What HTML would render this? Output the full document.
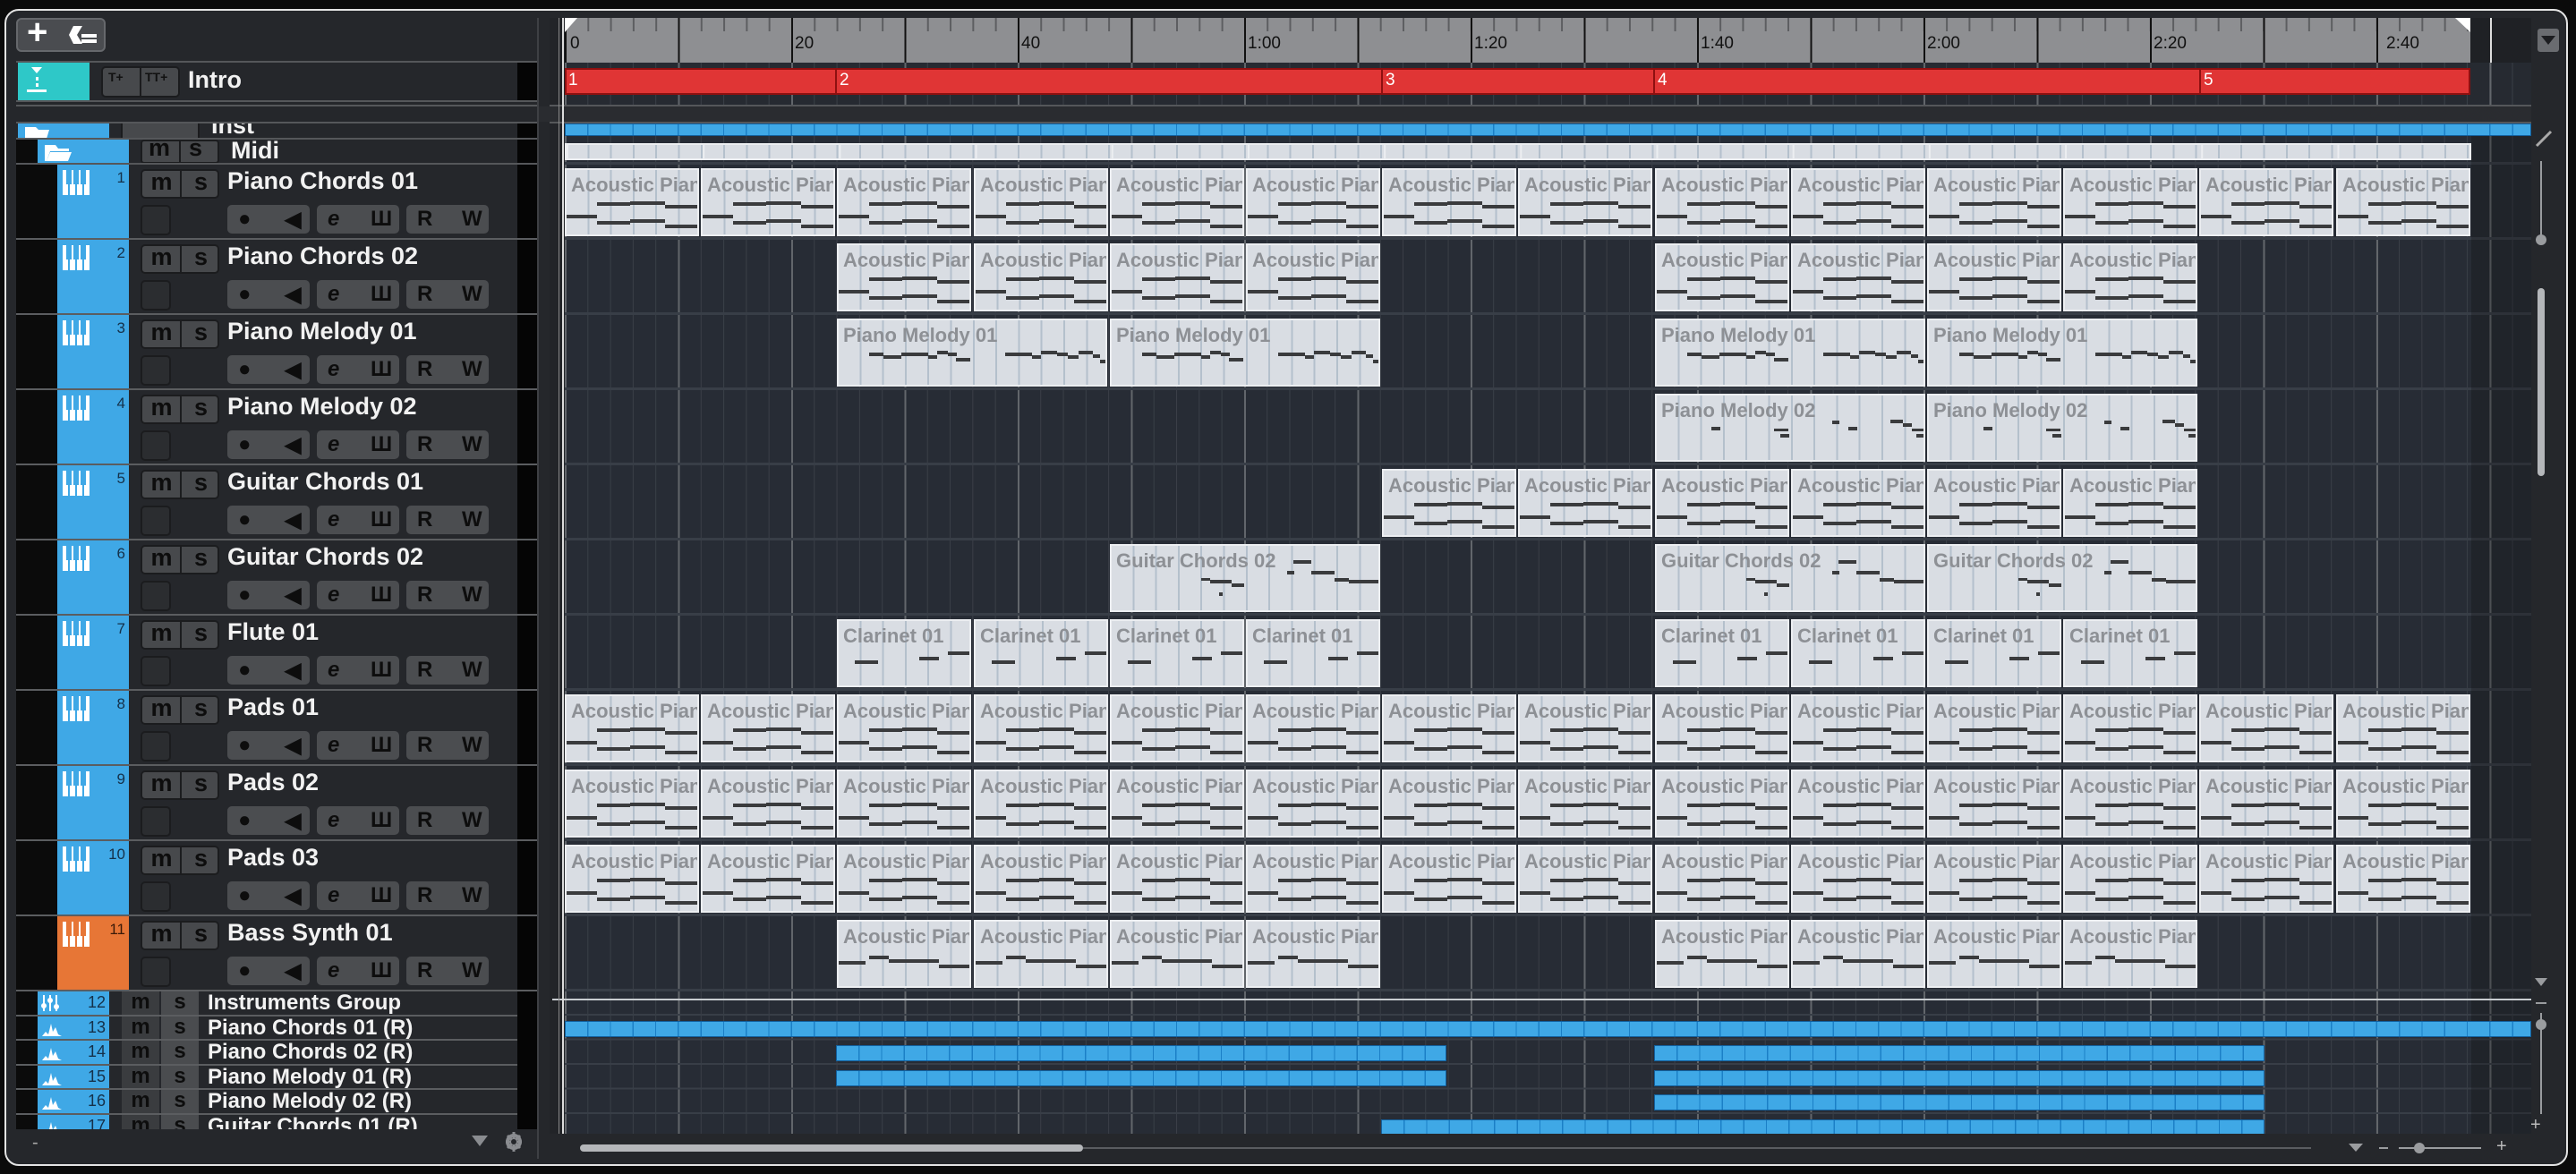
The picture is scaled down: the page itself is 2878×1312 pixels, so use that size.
<!DOCTYPE html>
<html><head><meta charset="utf-8">
<style>
*{box-sizing:border-box}
body{margin:0;width:2878px;height:1312px;background:#0b0b0b;overflow:hidden;position:relative;font-family:"Liberation Sans Narrow","Liberation Sans",sans-serif}
div{position:absolute}
.win{left:5px;top:10px;width:2864px;height:1293px;border:2px solid #e4e4e4;border-radius:16px;background:#25272b}
.tr{left:0;width:600px;height:84px}
.blk{left:18px;top:0;width:46px;height:84px;background:#0b0b0b}
.col{left:64px;top:0;width:80px;height:82px;background:#3fa8e6}
.num{left:108px;top:5px;width:32px;text-align:right;font:17px "Liberation Sans",sans-serif;color:#15314a}
.ms{left:157px;top:5px;width:88px;height:33px;border:2px solid #1b1c1e;border-radius:5px;background:#47494c;overflow:hidden}
.ms span{position:absolute;top:-3px;width:43px;text-align:center;font:bold 27px "Liberation Sans",sans-serif;color:#0d0d0d}
.ms i{position:absolute;left:42px;top:0;width:2px;height:100%;background:#1b1c1e}
.nm{left:254px;top:3px;font-weight:bold;font-size:27px;color:#f2f2f2;white-space:nowrap}
.sq{left:157px;top:45px;width:34px;height:34px;border:2px solid #1b1c1e;border-radius:5px;background:#2b2d30}
.g{top:45px;width:92px;height:32px;border-radius:5px;background:#4b4d50;font:bold 24px "Liberation Sans",sans-serif;color:#0d0d0d}
.g span{position:absolute;top:2px}
.bs{left:578px;top:0;width:22px;height:84px;background:#050505}
.ln{left:18px;top:82px;width:582px;height:2px;background:#5b5d60}
.c{top:4px;height:76px;width:150px;border:2px solid #eceef1;background-color:#d9dde3;overflow:hidden;font:bold 22px "Liberation Sans",sans-serif;color:#8d9095;white-space:nowrap;padding:4px 0 0 5px;
 --b:linear-gradient(#3a3b3d,#3a3b3d);--v:repeating-linear-gradient(90deg,transparent 0 23.3px,#b4c0cc 23.3px 25.3px)}
.w2{width:302px}
.pa{background:var(--b) 34px 36px/37px 4px no-repeat,var(--b) 71px 35px/39px 4px no-repeat,var(--b) 110px 39px/36px 4px no-repeat,var(--b) 0 50px/34px 4px no-repeat,var(--b) 34px 57px/37px 4px no-repeat,var(--b) 71px 55px/39px 4px no-repeat,var(--b) 110px 61px/36px 4px no-repeat,var(--v),#d9dde3}
.pm{background:var(--b) 34px 36px/16px 4px no-repeat,var(--b) 50px 39px/20px 4px no-repeat,var(--b) 70px 36px/30px 4px no-repeat,var(--b) 100px 39px/10px 4px no-repeat,var(--b) 110px 34px/12px 4px no-repeat,var(--b) 122px 36px/10px 4px no-repeat,var(--b) 131px 42px/16px 4px no-repeat,var(--b) 186px 36px/30px 4px no-repeat,var(--b) 216px 39px/10px 4px no-repeat,var(--b) 226px 34px/18px 4px no-repeat,var(--b) 244px 36px/12px 4px no-repeat,var(--b) 256px 39px/12px 4px no-repeat,var(--b) 268px 34px/16px 4px no-repeat,var(--b) 284px 38px/8px 4px no-repeat,var(--b) 292px 44px/8px 4px no-repeat,var(--v),#d9dde3}
.pn{background:var(--b) 61px 35px/10px 4px no-repeat,var(--b) 131px 37px/16px 3px no-repeat,var(--b) 138px 43px/10px 4px no-repeat,var(--b) 196px 28px/8px 4px no-repeat,var(--b) 214px 35px/10px 4px no-repeat,var(--b) 261px 27px/14px 4px no-repeat,var(--b) 275px 31px/10px 4px no-repeat,var(--b) 285px 37px/14px 3px no-repeat,var(--b) 290px 43px/10px 4px no-repeat,var(--v),#d9dde3}
.pg{background:var(--b) 100px 36px/10px 3px no-repeat,var(--b) 110px 38px/24px 4px no-repeat,var(--b) 134px 42px/14px 4px no-repeat,var(--b) 196px 28px/8px 4px no-repeat,var(--b) 203px 16px/20px 4px no-repeat,var(--b) 223px 28px/26px 4px no-repeat,var(--b) 249px 36px/16px 4px no-repeat,var(--b) 265px 38px/34px 4px no-repeat,var(--b) 120px 52px/4px 4px no-repeat,var(--v),#d9dde3}
.pc{background:var(--b) 18px 44px/26px 4px no-repeat,var(--b) 90px 40px/22px 4px no-repeat,var(--b) 122px 34px/24px 4px no-repeat,var(--v),#d9dde3}
.pb{background:var(--b) 34px 38px/22px 4px no-repeat,var(--b) 56px 42px/56px 4px no-repeat,var(--b) 112px 48px/34px 4px no-repeat,var(--b) 0 44px/30px 4px no-repeat,var(--v),#d9dde3}
.bb{height:18px;background:repeating-linear-gradient(90deg,transparent 0 24px,#1b7fc6 24px 25.3px),#3fa8e6;border:1px solid #12609e}
.sr{left:0;width:600px;height:27.5px}
.sr .b1{left:18px;top:0;width:24px;height:28px;background:#0b0b0b}
.sr .b2{left:42px;top:0;width:80px;height:26px;background:#3fa8e6}
.sr .n{left:88px;top:2px;width:30px;text-align:right;font:18px "Liberation Sans Narrow","Liberation Sans",sans-serif;color:#15314a}
.sr .m{left:136px;top:0;width:42px;height:26px;background:#3a3c3f;font:bold 24px "Liberation Sans",sans-serif;color:#0d0d0d;text-align:center;line-height:24px}
.sr .s{left:180px;top:0;width:42px;height:26px;background:#4a4c4f;font:bold 24px "Liberation Sans",sans-serif;color:#0d0d0d;text-align:center;line-height:24px}
.sr .t{left:232px;top:-1px;font-weight:bold;font-size:24px;color:#f2f2f2;white-space:nowrap}
.sr .l{left:18px;top:25.5px;width:582px;height:2px;background:#5b5d60}
.sr .k{left:578px;top:0;width:22px;height:28px;background:#050505}
.lab{top:38px;font:19px "Liberation Sans",sans-serif;color:#111}
.mk{top:2px;font:19px "Liberation Sans",sans-serif;color:#fff}
</style></head><body>
<div class="win"></div>

<div style="left:18px;top:20px;width:100px;height:38px;background:#4a4c50;border:2px solid #66686c;border-radius:6px"></div>
<div style="left:30px;top:14px;font:bold 40px 'Liberation Sans',sans-serif;color:#fff">+</div>
<svg style="position:absolute;left:76px;top:27px" width="34" height="24"><path d="M6 2h10l-6 10 6 10H6L1 12z" fill="#fff"/><rect x="15" y="11" width="17" height="4" fill="#fff"/><rect x="15" y="17" width="17" height="4" fill="#fff"/></svg>
<div style="left:18px;top:68px;width:582px;height:2px;background:#55575a"></div>

<div style="left:18px;top:70px;width:560px;height:43px;background:#25272b"></div>
<div style="left:20px;top:70px;width:80px;height:42px;background:#2ec8c8"></div>
<svg style="position:absolute;left:25px;top:73px" width="32" height="34"><path d="M10 2h12l-6 7z" fill="#fff"/><rect x="15" y="13" width="3" height="4" fill="#fff"/><rect x="15" y="20" width="3" height="4" fill="#fff"/><rect x="5" y="27" width="22" height="3" fill="#fff"/></svg>
<div style="left:113px;top:74px;width:88px;height:35px;border:2px solid #1b1c1e;border-radius:5px;background:#47494c"></div>
<div style="left:156px;top:76px;width:2px;height:31px;background:#1b1c1e"></div>
<div style="left:121px;top:78px;font:14px 'Liberation Sans',sans-serif;color:#111;font-weight:bold">T+</div>
<div style="left:162px;top:78px;font:14px 'Liberation Sans',sans-serif;color:#111;font-weight:bold">TT+</div>
<div style="left:210px;top:74px;font-weight:bold;font-size:27px;color:#f2f2f2">Intro</div>
<div style="left:578px;top:70px;width:22px;height:43px;background:#050505"></div>
<div style="left:18px;top:112px;width:582px;height:2px;background:#55575a"></div>
<div style="left:18px;top:117px;width:582px;height:2px;background:#55575a"></div>
<div style="left:18px;top:136px;width:582px;height:2px;background:#55575a"></div>

<div style="left:0;top:138px;width:600px;height:17px;overflow:hidden">
 <div style="left:20px;top:0;width:102px;height:17px;background:#3fa8e6"></div>
 <svg style="position:absolute;left:26px;top:0" width="36" height="17"><path d="M2 4h12l3 3h12l-3 10H2z" fill="#fff"/></svg>
 <div style="left:135px;top:-2px;width:88px;height:22px;background:#47494c;border:2px solid #1b1c1e"></div>
 <div style="left:236px;top:-13px;font-weight:bold;font-size:27px;color:#f2f2f2">Inst</div>
 <div style="left:578px;top:0;width:22px;height:17px;background:#050505"></div>
</div>
<div style="left:18px;top:154px;width:582px;height:2px;background:#55575a"></div>
<div style="left:18px;top:156px;width:24px;height:28px;background:#0b0b0b"></div>
<div style="left:42px;top:156px;width:102px;height:27px;background:#3fa8e6"></div>
<svg style="position:absolute;left:48px;top:160px" width="36" height="22"><path d="M2 2h12l3 4h12v3H8L4 20H2z" fill="#fff"/><path d="M8 10h24l-4 10H4z" fill="#fff"/></svg>
<div style="left:157px;top:156px;width:88px;height:27px;border:2px solid #1b1c1e;border-radius:4px;background:#47494c"></div>
<div style="left:200px;top:157px;width:2px;height:26px;background:#1b1c1e"></div>
<div style="left:166px;top:150px;font:bold 27px 'Liberation Sans',sans-serif;color:#0d0d0d">m</div>
<div style="left:211px;top:150px;font:bold 27px 'Liberation Sans',sans-serif;color:#0d0d0d">s</div>
<div style="left:258px;top:153px;font-weight:bold;font-size:27px;color:#f2f2f2">Midi</div>
<div style="left:578px;top:156px;width:22px;height:28px;background:#050505"></div>
<div style="left:18px;top:182px;width:582px;height:2px;background:#55575a"></div>

<div class="tr" style="top:184px"><div class="blk"></div><div class="col"></div><svg style="position:absolute;left:70px;top:6px;color:#3fa8e6" width="30" height="28"><rect width="30" height="28" fill="#fff"/><rect x="6" width="2" height="28" fill="currentColor"/><rect x="14" width="2" height="28" fill="currentColor"/><rect x="22" width="2" height="28" fill="currentColor"/><rect x="4" width="6" height="16" fill="currentColor"/><rect x="12" width="6" height="16" fill="currentColor"/><rect x="20" width="6" height="16" fill="currentColor"/></svg><div class="num">1</div><div class="ms"><span style="left:0">m</span><i></i><span style="left:44px">s</span></div><div class="nm">Piano Chords 01</div><div class="sq"></div><div class="g" style="left:254px"><span style="left:12px">●</span><span style="left:64px">◀</span></div><div class="g" style="left:354px"><span style="left:12px;font-style:italic">e</span><span style="left:60px">Ш</span></div><div class="g" style="left:454px"><span style="left:12px">R</span><span style="left:62px">W</span></div><div class="bs"></div><div class="ln"></div></div>
<div class="tr" style="top:268px"><div class="blk"></div><div class="col"></div><svg style="position:absolute;left:70px;top:6px;color:#3fa8e6" width="30" height="28"><rect width="30" height="28" fill="#fff"/><rect x="6" width="2" height="28" fill="currentColor"/><rect x="14" width="2" height="28" fill="currentColor"/><rect x="22" width="2" height="28" fill="currentColor"/><rect x="4" width="6" height="16" fill="currentColor"/><rect x="12" width="6" height="16" fill="currentColor"/><rect x="20" width="6" height="16" fill="currentColor"/></svg><div class="num">2</div><div class="ms"><span style="left:0">m</span><i></i><span style="left:44px">s</span></div><div class="nm">Piano Chords 02</div><div class="sq"></div><div class="g" style="left:254px"><span style="left:12px">●</span><span style="left:64px">◀</span></div><div class="g" style="left:354px"><span style="left:12px;font-style:italic">e</span><span style="left:60px">Ш</span></div><div class="g" style="left:454px"><span style="left:12px">R</span><span style="left:62px">W</span></div><div class="bs"></div><div class="ln"></div></div>
<div class="tr" style="top:352px"><div class="blk"></div><div class="col"></div><svg style="position:absolute;left:70px;top:6px;color:#3fa8e6" width="30" height="28"><rect width="30" height="28" fill="#fff"/><rect x="6" width="2" height="28" fill="currentColor"/><rect x="14" width="2" height="28" fill="currentColor"/><rect x="22" width="2" height="28" fill="currentColor"/><rect x="4" width="6" height="16" fill="currentColor"/><rect x="12" width="6" height="16" fill="currentColor"/><rect x="20" width="6" height="16" fill="currentColor"/></svg><div class="num">3</div><div class="ms"><span style="left:0">m</span><i></i><span style="left:44px">s</span></div><div class="nm">Piano Melody 01</div><div class="sq"></div><div class="g" style="left:254px"><span style="left:12px">●</span><span style="left:64px">◀</span></div><div class="g" style="left:354px"><span style="left:12px;font-style:italic">e</span><span style="left:60px">Ш</span></div><div class="g" style="left:454px"><span style="left:12px">R</span><span style="left:62px">W</span></div><div class="bs"></div><div class="ln"></div></div>
<div class="tr" style="top:436px"><div class="blk"></div><div class="col"></div><svg style="position:absolute;left:70px;top:6px;color:#3fa8e6" width="30" height="28"><rect width="30" height="28" fill="#fff"/><rect x="6" width="2" height="28" fill="currentColor"/><rect x="14" width="2" height="28" fill="currentColor"/><rect x="22" width="2" height="28" fill="currentColor"/><rect x="4" width="6" height="16" fill="currentColor"/><rect x="12" width="6" height="16" fill="currentColor"/><rect x="20" width="6" height="16" fill="currentColor"/></svg><div class="num">4</div><div class="ms"><span style="left:0">m</span><i></i><span style="left:44px">s</span></div><div class="nm">Piano Melody 02</div><div class="sq"></div><div class="g" style="left:254px"><span style="left:12px">●</span><span style="left:64px">◀</span></div><div class="g" style="left:354px"><span style="left:12px;font-style:italic">e</span><span style="left:60px">Ш</span></div><div class="g" style="left:454px"><span style="left:12px">R</span><span style="left:62px">W</span></div><div class="bs"></div><div class="ln"></div></div>
<div class="tr" style="top:520px"><div class="blk"></div><div class="col"></div><svg style="position:absolute;left:70px;top:6px;color:#3fa8e6" width="30" height="28"><rect width="30" height="28" fill="#fff"/><rect x="6" width="2" height="28" fill="currentColor"/><rect x="14" width="2" height="28" fill="currentColor"/><rect x="22" width="2" height="28" fill="currentColor"/><rect x="4" width="6" height="16" fill="currentColor"/><rect x="12" width="6" height="16" fill="currentColor"/><rect x="20" width="6" height="16" fill="currentColor"/></svg><div class="num">5</div><div class="ms"><span style="left:0">m</span><i></i><span style="left:44px">s</span></div><div class="nm">Guitar Chords 01</div><div class="sq"></div><div class="g" style="left:254px"><span style="left:12px">●</span><span style="left:64px">◀</span></div><div class="g" style="left:354px"><span style="left:12px;font-style:italic">e</span><span style="left:60px">Ш</span></div><div class="g" style="left:454px"><span style="left:12px">R</span><span style="left:62px">W</span></div><div class="bs"></div><div class="ln"></div></div>
<div class="tr" style="top:604px"><div class="blk"></div><div class="col"></div><svg style="position:absolute;left:70px;top:6px;color:#3fa8e6" width="30" height="28"><rect width="30" height="28" fill="#fff"/><rect x="6" width="2" height="28" fill="currentColor"/><rect x="14" width="2" height="28" fill="currentColor"/><rect x="22" width="2" height="28" fill="currentColor"/><rect x="4" width="6" height="16" fill="currentColor"/><rect x="12" width="6" height="16" fill="currentColor"/><rect x="20" width="6" height="16" fill="currentColor"/></svg><div class="num">6</div><div class="ms"><span style="left:0">m</span><i></i><span style="left:44px">s</span></div><div class="nm">Guitar Chords 02</div><div class="sq"></div><div class="g" style="left:254px"><span style="left:12px">●</span><span style="left:64px">◀</span></div><div class="g" style="left:354px"><span style="left:12px;font-style:italic">e</span><span style="left:60px">Ш</span></div><div class="g" style="left:454px"><span style="left:12px">R</span><span style="left:62px">W</span></div><div class="bs"></div><div class="ln"></div></div>
<div class="tr" style="top:688px"><div class="blk"></div><div class="col"></div><svg style="position:absolute;left:70px;top:6px;color:#3fa8e6" width="30" height="28"><rect width="30" height="28" fill="#fff"/><rect x="6" width="2" height="28" fill="currentColor"/><rect x="14" width="2" height="28" fill="currentColor"/><rect x="22" width="2" height="28" fill="currentColor"/><rect x="4" width="6" height="16" fill="currentColor"/><rect x="12" width="6" height="16" fill="currentColor"/><rect x="20" width="6" height="16" fill="currentColor"/></svg><div class="num">7</div><div class="ms"><span style="left:0">m</span><i></i><span style="left:44px">s</span></div><div class="nm">Flute 01</div><div class="sq"></div><div class="g" style="left:254px"><span style="left:12px">●</span><span style="left:64px">◀</span></div><div class="g" style="left:354px"><span style="left:12px;font-style:italic">e</span><span style="left:60px">Ш</span></div><div class="g" style="left:454px"><span style="left:12px">R</span><span style="left:62px">W</span></div><div class="bs"></div><div class="ln"></div></div>
<div class="tr" style="top:772px"><div class="blk"></div><div class="col"></div><svg style="position:absolute;left:70px;top:6px;color:#3fa8e6" width="30" height="28"><rect width="30" height="28" fill="#fff"/><rect x="6" width="2" height="28" fill="currentColor"/><rect x="14" width="2" height="28" fill="currentColor"/><rect x="22" width="2" height="28" fill="currentColor"/><rect x="4" width="6" height="16" fill="currentColor"/><rect x="12" width="6" height="16" fill="currentColor"/><rect x="20" width="6" height="16" fill="currentColor"/></svg><div class="num">8</div><div class="ms"><span style="left:0">m</span><i></i><span style="left:44px">s</span></div><div class="nm">Pads 01</div><div class="sq"></div><div class="g" style="left:254px"><span style="left:12px">●</span><span style="left:64px">◀</span></div><div class="g" style="left:354px"><span style="left:12px;font-style:italic">e</span><span style="left:60px">Ш</span></div><div class="g" style="left:454px"><span style="left:12px">R</span><span style="left:62px">W</span></div><div class="bs"></div><div class="ln"></div></div>
<div class="tr" style="top:856px"><div class="blk"></div><div class="col"></div><svg style="position:absolute;left:70px;top:6px;color:#3fa8e6" width="30" height="28"><rect width="30" height="28" fill="#fff"/><rect x="6" width="2" height="28" fill="currentColor"/><rect x="14" width="2" height="28" fill="currentColor"/><rect x="22" width="2" height="28" fill="currentColor"/><rect x="4" width="6" height="16" fill="currentColor"/><rect x="12" width="6" height="16" fill="currentColor"/><rect x="20" width="6" height="16" fill="currentColor"/></svg><div class="num">9</div><div class="ms"><span style="left:0">m</span><i></i><span style="left:44px">s</span></div><div class="nm">Pads 02</div><div class="sq"></div><div class="g" style="left:254px"><span style="left:12px">●</span><span style="left:64px">◀</span></div><div class="g" style="left:354px"><span style="left:12px;font-style:italic">e</span><span style="left:60px">Ш</span></div><div class="g" style="left:454px"><span style="left:12px">R</span><span style="left:62px">W</span></div><div class="bs"></div><div class="ln"></div></div>
<div class="tr" style="top:940px"><div class="blk"></div><div class="col"></div><svg style="position:absolute;left:70px;top:6px;color:#3fa8e6" width="30" height="28"><rect width="30" height="28" fill="#fff"/><rect x="6" width="2" height="28" fill="currentColor"/><rect x="14" width="2" height="28" fill="currentColor"/><rect x="22" width="2" height="28" fill="currentColor"/><rect x="4" width="6" height="16" fill="currentColor"/><rect x="12" width="6" height="16" fill="currentColor"/><rect x="20" width="6" height="16" fill="currentColor"/></svg><div class="num">10</div><div class="ms"><span style="left:0">m</span><i></i><span style="left:44px">s</span></div><div class="nm">Pads 03</div><div class="sq"></div><div class="g" style="left:254px"><span style="left:12px">●</span><span style="left:64px">◀</span></div><div class="g" style="left:354px"><span style="left:12px;font-style:italic">e</span><span style="left:60px">Ш</span></div><div class="g" style="left:454px"><span style="left:12px">R</span><span style="left:62px">W</span></div><div class="bs"></div><div class="ln"></div></div>
<div class="tr" style="top:1024px"><div class="blk"></div><div class="col" style="background:#e77636"></div><svg style="position:absolute;left:70px;top:6px;color:#e77636" width="30" height="28"><rect width="30" height="28" fill="#fff"/><rect x="6" width="2" height="28" fill="currentColor"/><rect x="14" width="2" height="28" fill="currentColor"/><rect x="22" width="2" height="28" fill="currentColor"/><rect x="4" width="6" height="16" fill="currentColor"/><rect x="12" width="6" height="16" fill="currentColor"/><rect x="20" width="6" height="16" fill="currentColor"/></svg><div class="num" style="color:#3a1a08">11</div><div class="ms"><span style="left:0">m</span><i></i><span style="left:44px">s</span></div><div class="nm">Bass Synth 01</div><div class="sq"></div><div class="g" style="left:254px"><span style="left:12px">●</span><span style="left:64px">◀</span></div><div class="g" style="left:354px"><span style="left:12px;font-style:italic">e</span><span style="left:60px">Ш</span></div><div class="g" style="left:454px"><span style="left:12px">R</span><span style="left:62px">W</span></div><div class="bs"></div><div class="ln"></div></div>

<div style="left:0;top:1108px;width:600px;height:154px;overflow:hidden">
 <div class="sr" style="top:0"><div class="b1"></div><div class="b2"></div><svg style="position:absolute;left:46px;top:3px" width="22" height="20"><path d="M3 1v18M10 1v18M17 1v18" stroke="#fff" stroke-width="2"/><circle cx="3" cy="13" r="3" fill="#fff"/><circle cx="10" cy="7" r="3" fill="#fff"/><circle cx="17" cy="14" r="3" fill="#fff"/></svg><div class="n">12</div><div class="m">m</div><div class="s">s</div><div class="t">Instruments Group</div><div class="l"></div><div class="k"></div></div>
 <div class="sr" style="top:27.5px"><div class="b1"></div><div class="b2"></div><svg style="position:absolute;left:46px;top:3px" width="24" height="20"><path d="M1 19L5 14L8 17L11 5L13 14L16 9L19 17L23 19Z" fill="#fff"/></svg><div class="n">13</div><div class="m">m</div><div class="s">s</div><div class="t">Piano Chords 01 (R)</div><div class="l"></div><div class="k"></div></div>
 <div class="sr" style="top:55px"><div class="b1"></div><div class="b2"></div><svg style="position:absolute;left:46px;top:3px" width="24" height="20"><path d="M1 19L5 14L8 17L11 5L13 14L16 9L19 17L23 19Z" fill="#fff"/></svg><div class="n">14</div><div class="m">m</div><div class="s">s</div><div class="t">Piano Chords 02 (R)</div><div class="l"></div><div class="k"></div></div>
 <div class="sr" style="top:82.5px"><div class="b1"></div><div class="b2"></div><svg style="position:absolute;left:46px;top:3px" width="24" height="20"><path d="M1 19L5 14L8 17L11 5L13 14L16 9L19 17L23 19Z" fill="#fff"/></svg><div class="n">15</div><div class="m">m</div><div class="s">s</div><div class="t">Piano Melody 01 (R)</div><div class="l"></div><div class="k"></div></div>
 <div class="sr" style="top:110px"><div class="b1"></div><div class="b2"></div><svg style="position:absolute;left:46px;top:3px" width="24" height="20"><path d="M1 19L5 14L8 17L11 5L13 14L16 9L19 17L23 19Z" fill="#fff"/></svg><div class="n">16</div><div class="m">m</div><div class="s">s</div><div class="t">Piano Melody 02 (R)</div><div class="l"></div><div class="k"></div></div>
 <div class="sr" style="top:137.5px"><div class="b1"></div><div class="b2"></div><svg style="position:absolute;left:46px;top:3px" width="24" height="20"><path d="M1 19L5 14L8 17L11 5L13 14L16 9L19 17L23 19Z" fill="#fff"/></svg><div class="n">17</div><div class="m">m</div><div class="s">s</div><div class="t">Guitar Chords 01 (R)</div><div class="l"></div><div class="k"></div></div>
</div>
<div style="left:36px;top:1266px;font:20px 'Liberation Sans',sans-serif;color:#aaa">-</div>
<svg style="position:absolute;left:526px;top:1268px" width="20" height="14"><path d="M1 1h18L10 13z" fill="#8a8c90"/></svg>
<svg style="position:absolute;left:564px;top:1264px" width="20" height="24"><circle cx="10" cy="12" r="7" fill="none" stroke="#8a8c90" stroke-width="4"/><path d="M10 1v22M1 12h18M3 5l14 14M17 5L3 19" stroke="#8a8c90" stroke-width="3"/><circle cx="10" cy="12" r="3" fill="#25272b"/></svg>
<div style="left:600px;top:20px;width:2px;height:1275px;background:#3e4044"></div>

<div style="left:614px;top:20px;width:17px;height:1247px;background:#222428"></div>
<div style="left:631px;top:20px;width:2129px;height:50px;background:linear-gradient(90deg,#111 0 2px,transparent 2px) 0 0/126.5px 100%,linear-gradient(90deg,#5d5e61 0 2px,transparent 2px) 0 0/25.3px 15px repeat-x,#8e8f92"></div>
<div style="left:2760px;top:20px;width:68px;height:50px;background:#1f2125"></div>
<div style="left:2782px;top:20px;width:2px;height:50px;background:#ddd"></div>
<svg style="position:absolute;left:631px;top:20px" width="16" height="16"><path d="M0 0h14L0 16z" fill="#fff"/></svg>
<svg style="position:absolute;left:2743px;top:20px" width="17" height="16"><path d="M0 0h17v16z" fill="#fff"/></svg>
<div class="lab" style="left:637px">0</div>
<div class="lab" style="left:888px">20</div>
<div class="lab" style="left:1141px">40</div>
<div class="lab" style="left:1394px">1:00</div>
<div class="lab" style="left:1647px">1:20</div>
<div class="lab" style="left:1900px">1:40</div>
<div class="lab" style="left:2153px">2:00</div>
<div class="lab" style="left:2406px">2:20</div>
<div class="lab" style="left:2666px">2:40</div>
<div style="left:631px;top:70px;width:2197px;height:48px;background:linear-gradient(90deg,#62666b 0 2px,transparent 2px) 0 0/126.5px 100%,linear-gradient(90deg,#3a3f47 0 1px,transparent 1px) 0 0/25.3px 100%,#262a31"></div>
<div style="left:631px;top:76px;width:2129px;height:30px;background:#e03535;border:2px solid #8e1010"></div>
<div style="left:933px;top:76px;width:2px;height:30px;background:#8e1010"></div>
<div style="left:1543px;top:76px;width:2px;height:30px;background:#8e1010"></div>
<div style="left:1847px;top:76px;width:2px;height:30px;background:#8e1010"></div>
<div style="left:2457px;top:76px;width:2px;height:30px;background:#8e1010"></div>
<div class="mk" style="left:635px;top:79px">1</div>
<div class="mk" style="left:938px;top:79px">2</div>
<div class="mk" style="left:1548px;top:79px">3</div>
<div class="mk" style="left:1852px;top:79px">4</div>
<div class="mk" style="left:2462px;top:79px">5</div>
<div style="left:614px;top:117px;width:2214px;height:2px;background:#55575a"></div>
<div style="left:602px;top:119px;width:2226px;height:17px;background:#2a2c30"></div>
<div style="left:614px;top:136px;width:2214px;height:2px;background:#55575a"></div>
<div style="left:2835px;top:32px;width:24px;height:26px;background:#6a6c70;border-radius:3px"></div>
<svg style="position:absolute;left:2839px;top:40px" width="16" height="10"><path d="M0 0h16L8 10z" fill="#1c1d20"/></svg>
<svg style="position:absolute;left:2832px;top:145px" width="20" height="20"><path d="M2 18L18 2" stroke="#aaa" stroke-width="3"/></svg>
<div style="left:2838px;top:180px;width:2px;height:88px;background:#9a9c9f"></div>
<div style="left:2833px;top:262px;width:12px;height:12px;border-radius:6px;background:#9a9c9f"></div>
<div style="left:2835px;top:322px;width:8px;height:210px;border-radius:4px;background:#b5b7ba"></div>
<svg style="position:absolute;left:2832px;top:1093px" width="14" height="9"><path d="M0 0h14L7 9z" fill="#9a9c9f"/></svg>
<div style="left:2833px;top:1120px;width:12px;height:2px;background:#9a9c9f"></div>
<div style="left:2838px;top:1132px;width:2px;height:113px;background:#9a9c9f"></div>
<div style="left:2833px;top:1139px;width:12px;height:12px;border-radius:6px;background:#9a9c9f"></div>
<div style="left:2827px;top:1246px;font:20px 'Liberation Sans',sans-serif;color:#bbb">+</div>
<div style="left:631px;top:138px;width:2197px;height:1129px;background:linear-gradient(90deg,#62666b 0 2px,transparent 2px) 0 0/126.5px 100%,linear-gradient(90deg,#3a3f47 0 1px,transparent 1px) 0 0/25.3px 100%,#272c35"></div>
<div style="left:631px;top:181px;width:2197px;height:928px;background:linear-gradient(#383e47 0 3px,transparent 3px) 0 0/100% 84px"></div>
<div style="left:631px;top:1133px;width:2197px;height:134px;background:linear-gradient(#383e47 0 2px,transparent 2px) 0 0/100% 27.5px"></div>
<div style="left:2761px;top:138px;width:67px;height:1129px;background:rgba(10,10,12,.25)"></div>
<div style="left:617px;top:1116px;width:2211px;height:2px;background:#c8ccd0"></div>
<div class="bb" style="left:631px;top:138px;width:2197px;height:14px"></div>
<div style="left:631px;top:160px;width:2130px;height:19px;background:linear-gradient(90deg,#eceef1 0 2px,transparent 2px) 0 0/152.2px 100%,repeating-linear-gradient(90deg,transparent 0 23.3px,#b4c0cc 23.3px 25.3px),#d9dde3;border:2px solid #eceef1"></div>

<div style="left:0;top:184px">
<div class="c pa" style="left:631px">Acoustic Piano 01</div><div class="c pa" style="left:783px">Acoustic Piano 01</div><div class="c pa" style="left:935px">Acoustic Piano 01</div><div class="c pa" style="left:1088px">Acoustic Piano 01</div><div class="c pa" style="left:1240px">Acoustic Piano 01</div><div class="c pa" style="left:1392px">Acoustic Piano 01</div><div class="c pa" style="left:1544px">Acoustic Piano 01</div><div class="c pa" style="left:1696px">Acoustic Piano 01</div><div class="c pa" style="left:1849px">Acoustic Piano 01</div><div class="c pa" style="left:2001px">Acoustic Piano 01</div><div class="c pa" style="left:2153px">Acoustic Piano 01</div><div class="c pa" style="left:2305px">Acoustic Piano 01</div><div class="c pa" style="left:2457px">Acoustic Piano 01</div><div class="c pa" style="left:2610px">Acoustic Piano 01</div>
</div>
<div style="left:0;top:268px">
<div class="c pa" style="left:935px">Acoustic Piano 01</div><div class="c pa" style="left:1088px">Acoustic Piano 01</div><div class="c pa" style="left:1240px">Acoustic Piano 01</div><div class="c pa" style="left:1392px">Acoustic Piano 01</div><div class="c pa" style="left:1849px">Acoustic Piano 01</div><div class="c pa" style="left:2001px">Acoustic Piano 01</div><div class="c pa" style="left:2153px">Acoustic Piano 01</div><div class="c pa" style="left:2305px">Acoustic Piano 01</div>
</div>
<div style="left:0;top:352px">
<div class="c w2 pm" style="left:935px">Piano Melody 01</div><div class="c w2 pm" style="left:1240px">Piano Melody 01</div><div class="c w2 pm" style="left:1849px">Piano Melody 01</div><div class="c w2 pm" style="left:2153px">Piano Melody 01</div>
</div>
<div style="left:0;top:436px">
<div class="c w2 pn" style="left:1849px">Piano Melody 02</div><div class="c w2 pn" style="left:2153px">Piano Melody 02</div>
</div>
<div style="left:0;top:520px">
<div class="c pa" style="left:1544px">Acoustic Piano 01</div><div class="c pa" style="left:1696px">Acoustic Piano 01</div><div class="c pa" style="left:1849px">Acoustic Piano 01</div><div class="c pa" style="left:2001px">Acoustic Piano 01</div><div class="c pa" style="left:2153px">Acoustic Piano 01</div><div class="c pa" style="left:2305px">Acoustic Piano 01</div>
</div>
<div style="left:0;top:604px">
<div class="c w2 pg" style="left:1240px">Guitar Chords 02</div><div class="c w2 pg" style="left:1849px">Guitar Chords 02</div><div class="c w2 pg" style="left:2153px">Guitar Chords 02</div>
</div>
<div style="left:0;top:688px">
<div class="c pc" style="left:935px">Clarinet 01</div><div class="c pc" style="left:1088px">Clarinet 01</div><div class="c pc" style="left:1240px">Clarinet 01</div><div class="c pc" style="left:1392px">Clarinet 01</div><div class="c pc" style="left:1849px">Clarinet 01</div><div class="c pc" style="left:2001px">Clarinet 01</div><div class="c pc" style="left:2153px">Clarinet 01</div><div class="c pc" style="left:2305px">Clarinet 01</div>
</div>
<div style="left:0;top:772px">
<div class="c pa" style="left:631px">Acoustic Piano 01</div><div class="c pa" style="left:783px">Acoustic Piano 01</div><div class="c pa" style="left:935px">Acoustic Piano 01</div><div class="c pa" style="left:1088px">Acoustic Piano 01</div><div class="c pa" style="left:1240px">Acoustic Piano 01</div><div class="c pa" style="left:1392px">Acoustic Piano 01</div><div class="c pa" style="left:1544px">Acoustic Piano 01</div><div class="c pa" style="left:1696px">Acoustic Piano 01</div><div class="c pa" style="left:1849px">Acoustic Piano 01</div><div class="c pa" style="left:2001px">Acoustic Piano 01</div><div class="c pa" style="left:2153px">Acoustic Piano 01</div><div class="c pa" style="left:2305px">Acoustic Piano 01</div><div class="c pa" style="left:2457px">Acoustic Piano 01</div><div class="c pa" style="left:2610px">Acoustic Piano 01</div>
</div>
<div style="left:0;top:856px">
<div class="c pa" style="left:631px">Acoustic Piano 01</div><div class="c pa" style="left:783px">Acoustic Piano 01</div><div class="c pa" style="left:935px">Acoustic Piano 01</div><div class="c pa" style="left:1088px">Acoustic Piano 01</div><div class="c pa" style="left:1240px">Acoustic Piano 01</div><div class="c pa" style="left:1392px">Acoustic Piano 01</div><div class="c pa" style="left:1544px">Acoustic Piano 01</div><div class="c pa" style="left:1696px">Acoustic Piano 01</div><div class="c pa" style="left:1849px">Acoustic Piano 01</div><div class="c pa" style="left:2001px">Acoustic Piano 01</div><div class="c pa" style="left:2153px">Acoustic Piano 01</div><div class="c pa" style="left:2305px">Acoustic Piano 01</div><div class="c pa" style="left:2457px">Acoustic Piano 01</div><div class="c pa" style="left:2610px">Acoustic Piano 01</div>
</div>
<div style="left:0;top:940px">
<div class="c pa" style="left:631px">Acoustic Piano 01</div><div class="c pa" style="left:783px">Acoustic Piano 01</div><div class="c pa" style="left:935px">Acoustic Piano 01</div><div class="c pa" style="left:1088px">Acoustic Piano 01</div><div class="c pa" style="left:1240px">Acoustic Piano 01</div><div class="c pa" style="left:1392px">Acoustic Piano 01</div><div class="c pa" style="left:1544px">Acoustic Piano 01</div><div class="c pa" style="left:1696px">Acoustic Piano 01</div><div class="c pa" style="left:1849px">Acoustic Piano 01</div><div class="c pa" style="left:2001px">Acoustic Piano 01</div><div class="c pa" style="left:2153px">Acoustic Piano 01</div><div class="c pa" style="left:2305px">Acoustic Piano 01</div><div class="c pa" style="left:2457px">Acoustic Piano 01</div><div class="c pa" style="left:2610px">Acoustic Piano 01</div>
</div>
<div style="left:0;top:1024px">
<div class="c pb" style="left:935px">Acoustic Piano 01</div><div class="c pb" style="left:1088px">Acoustic Piano 01</div><div class="c pb" style="left:1240px">Acoustic Piano 01</div><div class="c pb" style="left:1392px">Acoustic Piano 01</div><div class="c pb" style="left:1849px">Acoustic Piano 01</div><div class="c pb" style="left:2001px">Acoustic Piano 01</div><div class="c pb" style="left:2153px">Acoustic Piano 01</div><div class="c pb" style="left:2305px">Acoustic Piano 01</div>
</div>

<div style="left:0;top:1108px;width:2878px;height:159px;overflow:hidden">
<div class="bb" style="left:631px;top:33px;width:2197px"></div>
<div class="bb" style="left:934px;top:60px;width:682px"></div><div class="bb" style="left:1848px;top:60px;width:682px"></div>
<div class="bb" style="left:934px;top:88px;width:682px"></div><div class="bb" style="left:1848px;top:88px;width:682px"></div>
<div class="bb" style="left:1848px;top:115px;width:682px"></div>
<div class="bb" style="left:1543px;top:143px;width:987px"></div>
</div>

<div style="left:628px;top:20px;width:2px;height:1247px;background:#dcdcdc"></div>
<div style="left:624px;top:20px;width:1px;height:1247px;background:#888"></div>

<div style="left:648px;top:1279px;width:562px;height:8px;border-radius:4px;background:#b5b7ba"></div>
<div style="left:1210px;top:1282px;width:1372px;height:2px;background:#5a5c60"></div>
<svg style="position:absolute;left:2624px;top:1278px" width="16" height="9"><path d="M0 0h16L8 9z" fill="#9a9c9f"/></svg>
<div style="left:2658px;top:1282px;width:10px;height:2px;background:#9a9c9f"></div>
<div style="left:2680px;top:1282px;width:92px;height:2px;background:#9a9c9f"></div>
<div style="left:2697px;top:1277px;width:12px;height:12px;border-radius:6px;background:#9a9c9f"></div>
<div style="left:2789px;top:1270px;font:20px 'Liberation Sans',sans-serif;color:#bbb">+</div>
</body></html>
